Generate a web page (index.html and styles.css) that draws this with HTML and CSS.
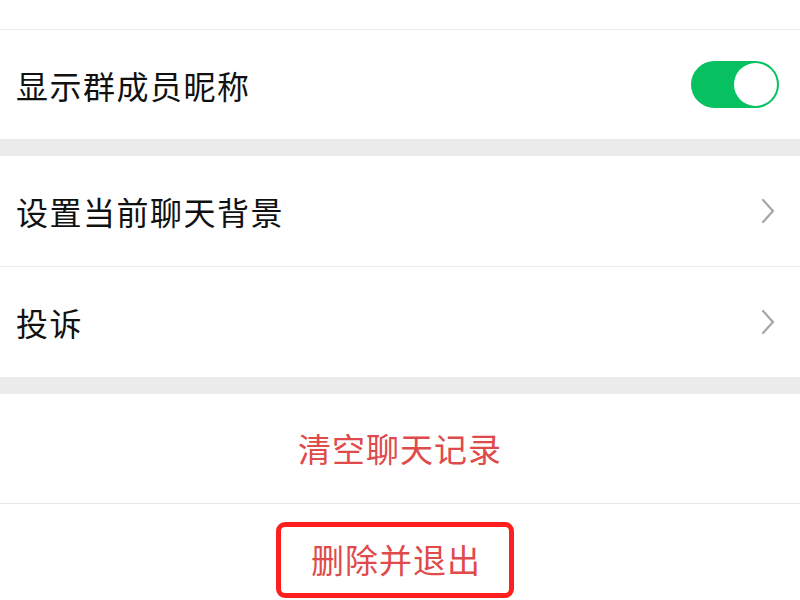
FILE: index.html
```html
<!DOCTYPE html>
<html lang="zh-CN">
<head>
  <meta charset="UTF-8">
  <meta name="viewport" content="width=device-width, initial-scale=1.0">
  <title>聊天信息</title>
  <link rel="stylesheet" href="styles.css">
</head>
<body>
  <div class="top-gap"></div>

  <div class="group">
    <div class="cell">
      <span class="label">显示群成员昵称</span>
      <span class="switch on"><span class="knob"></span></span>
    </div>
  </div>

  <div class="group tall">
    <div class="cell">
      <span class="label">设置当前聊天背景</span>
      <svg class="arrow" viewBox="0 0 14 26" width="14" height="26">
        <path d="M2 2 L12 13 L2 24" fill="none" stroke="#a6a6a6" stroke-width="2.2" stroke-linecap="round" stroke-linejoin="round"/>
      </svg>
    </div>
    <div class="cell">
      <span class="label">投诉</span>
      <svg class="arrow" viewBox="0 0 14 26" width="14" height="26">
        <path d="M2 2 L12 13 L2 24" fill="none" stroke="#a6a6a6" stroke-width="2.2" stroke-linecap="round" stroke-linejoin="round"/>
      </svg>
    </div>
  </div>

  <div class="group actions">
    <div class="cell center">
      <span class="danger">清空聊天记录</span>
    </div>
    <div class="cell center last">
      <span class="danger marked">删除并退出</span>
    </div>
  </div>
</body>
</html>
```

FILE: styles.css
```css
body {
  margin: 0;
  background: #ebebeb;
  font-family: "Noto Sans CJK SC", "Noto Sans", sans-serif;
  color: #111;
  width: 800px;
  height: 600px;
  overflow: hidden;
}

.top-gap { height: 29px; background: #fff; border-bottom: 1px solid #ececec; }

.group { background: #fff; margin-bottom: 17px; }
.group.actions { margin-bottom: 0; }

.cell {
  height: 109px;
  display: flex;
  align-items: center;
  justify-content: space-between;
  padding: 0 22px 0 16px;
  border-top: 1px solid #ececec;
}
.group .cell:first-child { border-top: none; }
.tall .cell { height: 110px; }

.label { font-size: 32px; letter-spacing: 1.5px; line-height: 1; }

.switch {
  width: 88px;
  height: 47px;
  border-radius: 24px;
  background: #07c160;
  display: flex;
  align-items: center;
  justify-content: flex-end;
  padding: 2px;
  box-sizing: border-box;
  margin-right: -1px;
}
.knob { width: 43px; height: 43px; border-radius: 50%; background: #fff; }

.arrow { margin-right: 3px; }

.center { justify-content: center; padding: 0; }
.actions .cell + .cell { border-top: 1px solid #e6e6e6; }
.cell.last { height: 97px; align-items: flex-start; padding-top: 18px; box-sizing: border-box; }

.danger { color: #e04a4a; font-size: 33px; letter-spacing: 1px; line-height: 1; }

.marked {
  border: 5px solid #ff1f1f;
  border-radius: 9px;
  padding: 16px 28px 17px 30px;
  margin-right: 10px;
}
```
